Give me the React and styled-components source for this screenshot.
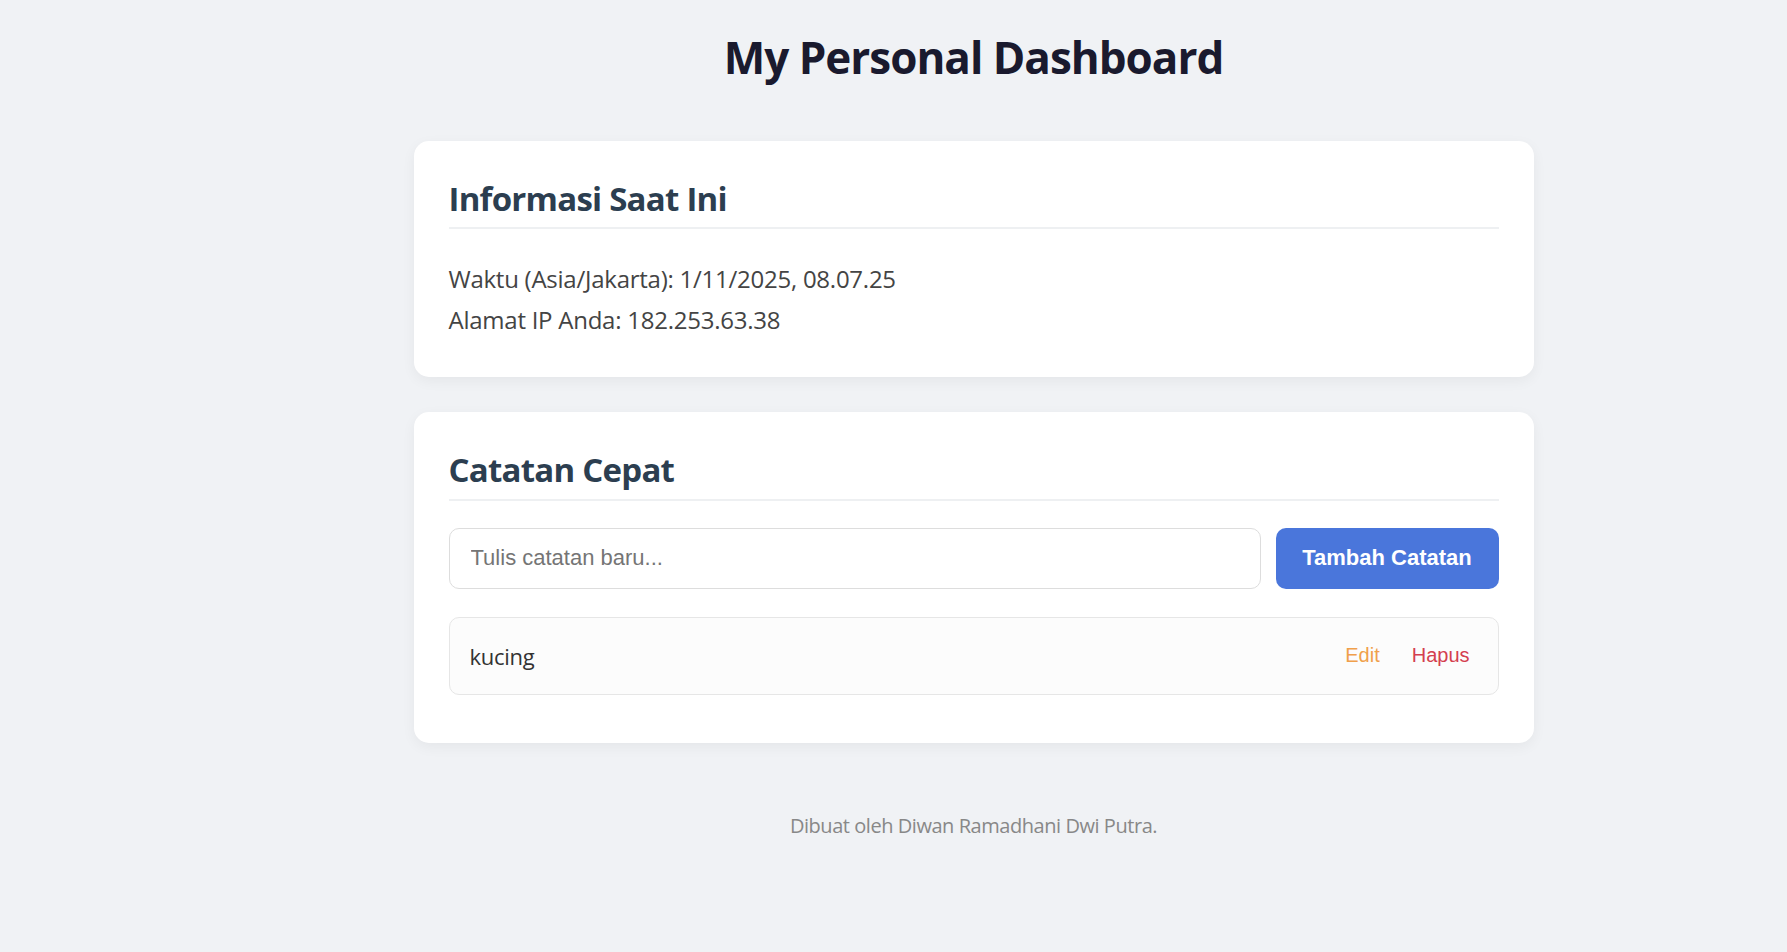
import React, { useState } from 'react';
import styled, { createGlobalStyle } from 'styled-components';

const GlobalStyle = createGlobalStyle`
  html, body {
    margin: 0;
    padding: 0;
    background: #f0f2f5;
  }
  body {
    font-family: "Open Sans", "Noto Sans", sans-serif;
    color: #444;
  }
`;

const Page = styled.div`
  min-height: 952px;
  box-sizing: border-box;
  padding: 31px 0 40px 160px;
`;

const Container = styled.div`
  max-width: 1120px;
  margin: 0 auto;
`;

const Title = styled.h1`
  margin: 0 0 57px;
  font-size: 44px;
  letter-spacing: -1px;
  line-height: 1.2;
  font-weight: 700;
  color: #1a1a2e;
  text-align: center;
`;

const Card = styled.section`
  background: #fff;
  border-radius: 15px;
  box-shadow: 0 4px 14px rgba(0, 0, 0, 0.05);
  padding: 36px 35px ${p => p.bottom}px;
  margin-bottom: 35px;
`;

const CardTitle = styled.h2`
  margin: 0 0 ${p => p.gap}px;
  padding-bottom: 6px;
  border-bottom: 2px solid #eef0f2;
  font-size: 33px;
  letter-spacing: -0.75px;
  line-height: 1.35;
  font-weight: 700;
  color: #2c3e50;
`;

const Info = styled.p`
  margin: 0;
  font-size: 24px;
  letter-spacing: -0.25px;
  line-height: 41px;
  color: #444;
`;

const NoteForm = styled.form`
  display: flex;
  gap: 15px;
  margin-bottom: 28px;
`;

const NoteInput = styled.input`
  flex: 1;
  height: 61px;
  box-sizing: border-box;
  padding: 0 21px;
  border: 1px solid #ddd;
  border-radius: 10px;
  font-family: "Liberation Sans", Arial, sans-serif;
  font-size: 22px;
  color: #333;
  outline: none;
  &::placeholder {
    color: #757575;
  }
`;

const AddButton = styled.button`
  width: 223px;
  height: 61px;
  border: none;
  border-radius: 10px;
  background: #4a76db;
  color: #fff;
  font-family: "Liberation Sans", Arial, sans-serif;
  font-size: 22px;
  font-weight: 700;
  cursor: pointer;
`;

const NoteList = styled.ul`
  list-style: none;
  margin: 0;
  padding: 0;
`;

const NoteItem = styled.li`
  display: flex;
  align-items: center;
  justify-content: space-between;
  height: 78px;
  box-sizing: border-box;
  padding: 0 20px;
  margin-bottom: 14px;
  background: #fcfcfc;
  border: 1px solid #e6e6e6;
  border-radius: 10px;
`;

const NoteText = styled.span`
  font-size: 22px;
  letter-spacing: -0.3px;
  color: #333;
`;

const Actions = styled.div`
  display: flex;
  gap: 16px;
`;

const LinkButton = styled.button`
  border: none;
  background: none;
  padding: 6px 8px;
  font-family: "Liberation Sans", Arial, sans-serif;
  font-size: 20px;
  color: ${p => p.tone};
  cursor: pointer;
`;

const Footer = styled.footer`
  margin-top: 69px;
  text-align: center;
  font-size: 20px;
  letter-spacing: -0.45px;
  color: #888;
`;

export default function App() {
  const [notes, setNotes] = useState(['kucing']);
  const [draft, setDraft] = useState('');

  const addNote = e => {
    e.preventDefault();
    if (!draft.trim()) return;
    setNotes([...notes, draft.trim()]);
    setDraft('');
  };

  return (
    <Page>
      <GlobalStyle />
      <Container>
        <Title>My Personal Dashboard</Title>

        <Card bottom={37}>
          <CardTitle gap={29}>Informasi Saat Ini</CardTitle>
          <Info>Waktu (Asia/Jakarta): 1/11/2025, 08.07.25</Info>
          <Info>Alamat IP Anda: 182.253.63.38</Info>
        </Card>

        <Card bottom={34}>
          <CardTitle gap={27}>Catatan Cepat</CardTitle>
          <NoteForm onSubmit={addNote}>
            <NoteInput
              placeholder="Tulis catatan baru..."
              value={draft}
              onChange={e => setDraft(e.target.value)}
            />
            <AddButton type="submit">Tambah Catatan</AddButton>
          </NoteForm>
          <NoteList>
            {notes.map((n, i) => (
              <NoteItem key={i}>
                <NoteText>{n}</NoteText>
                <Actions>
                  <LinkButton tone="#f0a04b">Edit</LinkButton>
                  <LinkButton tone="#d43f4f" onClick={() => setNotes(notes.filter((_, j) => j !== i))}>
                    Hapus
                  </LinkButton>
                </Actions>
              </NoteItem>
            ))}
          </NoteList>
        </Card>

        <Footer>Dibuat oleh Diwan Ramadhani Dwi Putra.</Footer>
      </Container>
    </Page>
  );
}
